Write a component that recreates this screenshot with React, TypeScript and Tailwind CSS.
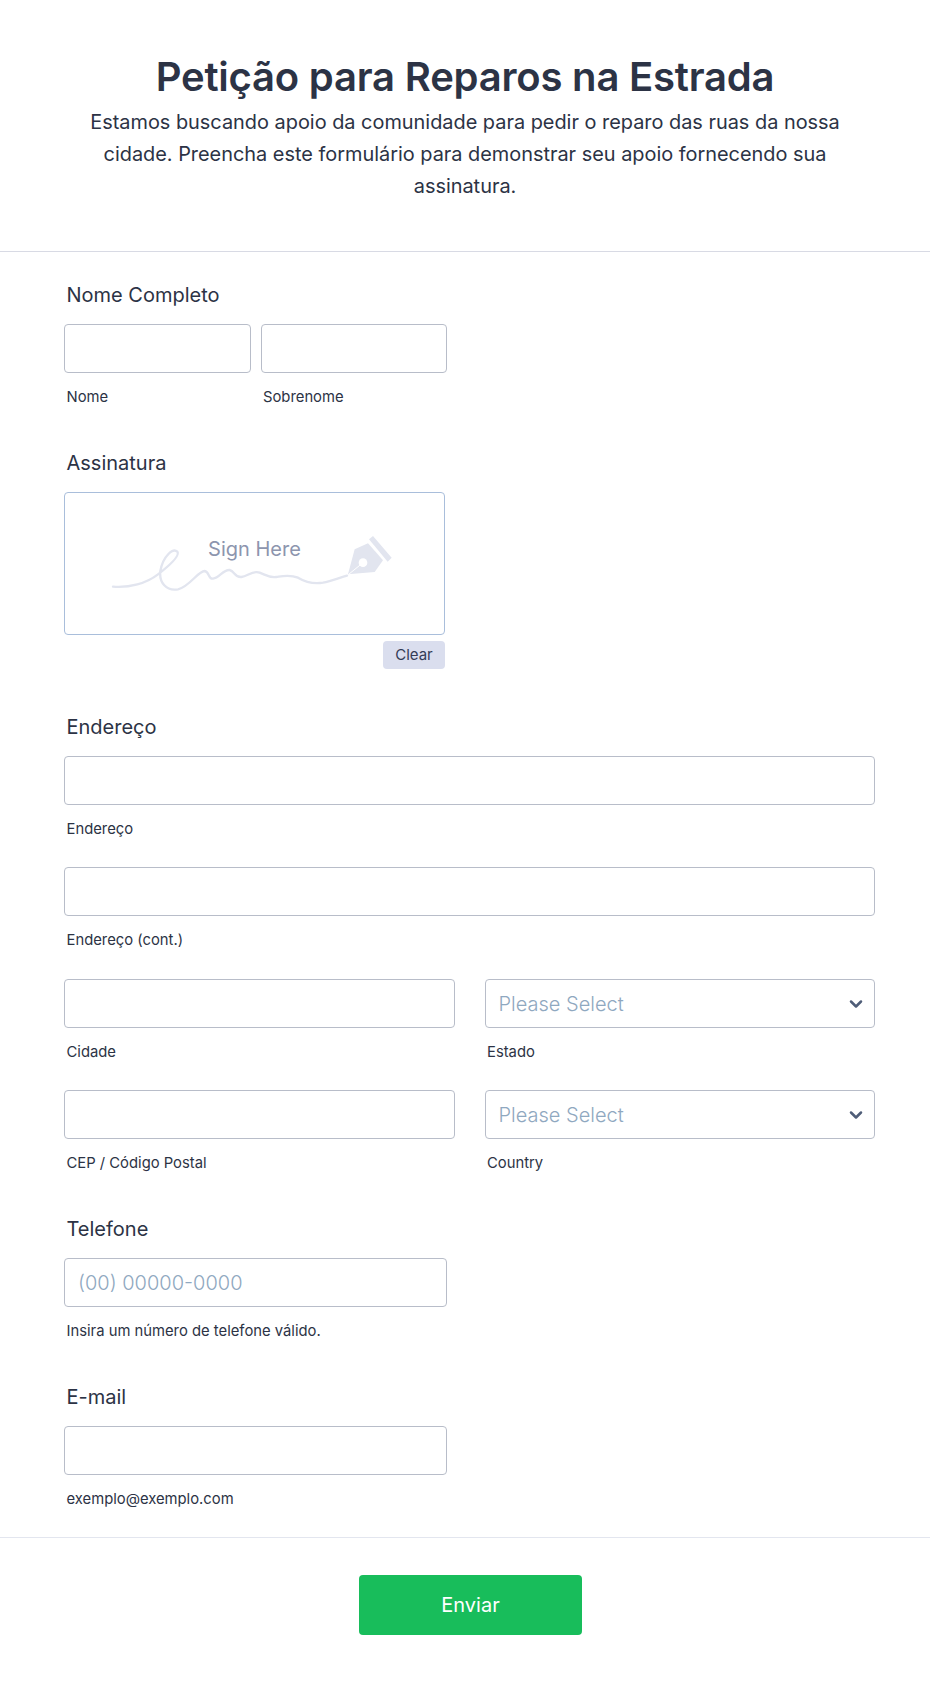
import { ChevronDown } from 'lucide-react';

const inputClass =
  'block h-[49px] w-full rounded-[4px] border border-[#b8bdc9] bg-white px-[13px] pt-[1px] text-[20px] font-light text-[#8fa8c0]';

function SubLabel({ children }: { children: string }) {
  return <p className="mt-[15px] pl-[2.5px] text-[14.8px] leading-[18px] text-[#2c3345]">{children}</p>;
}

function FieldLabel({ children }: { children: string }) {
  return <h3 className="mb-[17px] pl-[2.5px] text-[20px] font-normal leading-[24px] text-[#2c3345]">{children}</h3>;
}

function TextField({ label, placeholder }: { label: string; placeholder?: string }) {
  return (
    <div className="flex-1">
      <div className={`${inputClass} flex items-center`}>{placeholder}</div>
      <SubLabel>{label}</SubLabel>
    </div>
  );
}

function SelectField({ label }: { label: string }) {
  return (
    <div className="flex-1">
      <div className={`${inputClass} flex items-center justify-between pr-[8px]`}>
        Please Select
        <ChevronDown className="h-[20px] w-[20px] text-[#4f5d78]" strokeWidth={3} />
      </div>
      <SubLabel>{label}</SubLabel>
    </div>
  );
}

function SignaturePad() {
  return (
    <div className="w-[381px]">
      <div className="relative h-[143px] rounded-[4px] border border-[#a9bedb] bg-white">
        <svg className="absolute left-[-1px] top-[-1px]" width="381" height="143" viewBox="43 38 1143 429" fill="none">
          <path
            d="M190 322 C240 326 290 312 325 285 C360 258 392 230 383 217 C370 205 340 230 332 275 C328 310 350 336 385 330 C420 322 445 275 465 275 C480 277 475 300 490 298 C510 296 520 270 540 272 C555 275 555 295 575 293 C595 290 610 272 630 280 C650 288 660 296 680 293 C700 290 720 285 745 295 C770 310 790 315 820 310 C845 305 870 295 892 289"
            stroke="#e2e5ef"
            strokeWidth="7"
            strokeLinecap="round"
          />
          <path d="M895 285 L915 210 L955 192 L1000 243 L975 278 Z" fill="#e2e5ef" />
          <path d="M958 180 L970 170 L1026 235 L1014 247 Z" fill="#e2e5ef" />
          <circle cx="940" cy="250" r="13" fill="white" />
          <path d="M897 285 L940 250" stroke="white" strokeWidth="3" />
        </svg>
        <span className="absolute inset-x-0 top-[42px] text-center text-[20px] font-normal leading-[28px] text-[#8d95ae]">
          Sign Here
        </span>
      </div>
      <div className="mt-[6px] flex justify-end">
        <button className="h-[28px] w-[62px] rounded-[4px] bg-[#dadeee] text-[15px] text-[#343c56]">Clear</button>
      </div>
    </div>
  );
}

export default function App() {
  return (
    <div className="h-[1684px] w-full bg-white font-['Inter',sans-serif]">
      <header className="h-[252px] border-b border-[#d8dae4] px-[64px] pt-[50px] text-center text-[#2c3345]">
        <h1 className="text-[40px] font-semibold leading-[54px] tracking-[-0.2px]">Petição para Reparos na Estrada</h1>
        <p className="mx-auto mt-[2px] w-[780px] text-[19.9px] font-normal leading-[32px]">
          Estamos buscando apoio da comunidade para pedir o reparo das ruas da nossa cidade. Preencha este formulário para
          demonstrar seu apoio fornecendo sua assinatura.
        </p>
      </header>

      <main className="px-[64px] pt-[31px]">
        <section>
          <FieldLabel>Nome Completo</FieldLabel>
          <div className="flex w-[383px] gap-[10px]">
            <TextField label="Nome" />
            <TextField label="Sobrenome" />
          </div>
        </section>

        <section className="mt-[45px]">
          <FieldLabel>Assinatura</FieldLabel>
          <SignaturePad />
        </section>

        <section className="mt-[46px]">
          <FieldLabel>Endereço</FieldLabel>
          <div className="flex w-[811px] flex-col gap-[29.33px]">
            <TextField label="Endereço" />
            <TextField label="Endereço (cont.)" />
            <div className="flex gap-[30px]">
              <TextField label="Cidade" />
              <SelectField label="Estado" />
            </div>
            <div className="flex gap-[30px]">
              <TextField label="CEP / Código Postal" />
              <SelectField label="Country" />
            </div>
          </div>
        </section>

        <section className="mt-[45px] w-[383px]">
          <FieldLabel>Telefone</FieldLabel>
          <TextField label="Insira um número de telefone válido." placeholder="(00) 00000-0000" />
        </section>

        <section className="mt-[45px] w-[383px]">
          <FieldLabel>E-mail</FieldLabel>
          <TextField label="exemplo@exemplo.com" />
        </section>
      </main>

      <footer className="mt-[29px] flex justify-center border-t border-[#e3e6ef] pl-[11px] pt-[37px]">
        <button className="h-[60px] w-[223px] rounded-[4px] bg-[#18bd5b] pt-[1px] text-[20px] font-normal text-white">Enviar</button>
      </footer>
    </div>
  );
}
